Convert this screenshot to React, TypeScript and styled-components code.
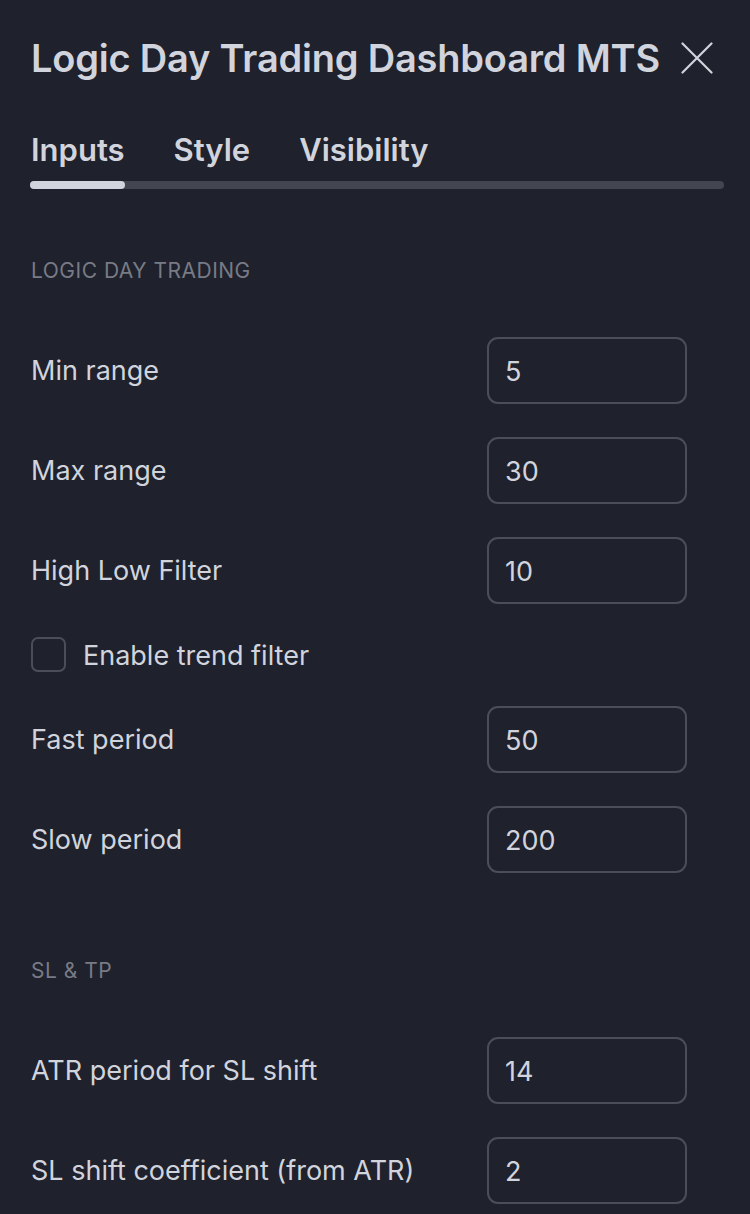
import React from "react";
import styled, { createGlobalStyle } from "styled-components";

const Global = createGlobalStyle`
  html, body { margin: 0; padding: 0; background: #1f212c; }
  body { font-family: Inter, "Noto Sans", sans-serif; color: #d1d4dc; -webkit-font-smoothing: antialiased; }
  * { box-sizing: border-box; }
`;

const Panel = styled.div`
  width: 750px;
  min-height: 1214px;
  background: #1f212c;
  padding: 0 26px 0 31px;
  overflow: hidden;
`;

const Header = styled.div`
  height: 115px;
  display: flex;
  align-items: center;
  justify-content: space-between;
  padding-right: 10px;
`;

const Title = styled.h1`
  margin: 0;
  font-size: 38px;
  font-weight: 600;
  line-height: 46px;
  color: #d1d4dc;
  letter-spacing: -0.2px;
  white-space: nowrap;
`;

const CloseButton = styled.button`
  width: 34px;
  height: 34px;
  padding: 0;
  border: none;
  background: transparent;
  color: #d1d4dc;
  display: flex;
  align-items: center;
  justify-content: center;
  cursor: pointer;
`;

const Tabs = styled.div`
  display: flex;
  gap: 49px;
  height: 66px;
  padding-top: 3px;
  align-items: center;
`;

const Tab = styled.div<{ $active?: boolean }>`
  font-size: 31px;
  font-weight: 600;
  color: #d1d4dc;
  line-height: 40px;
`;

const Track = styled.div`
  height: 8px;
  border-radius: 4px;
  background: #434651;
  margin-left: -1px;
  display: flex;
`;

const TrackFill = styled.div`
  width: 95px;
  height: 100%;
  border-radius: 4px;
  background: #d1d4dc;
`;

const SectionTitle = styled.div`
  padding-top: 70px;
  margin-bottom: 37px;
  font-size: 21px;
  line-height: 24px;
  color: #787b86;
  letter-spacing: 0.5px;
  text-transform: uppercase;
`;

const Row = styled.div<{ $compact?: boolean }>`
  height: ${(p) => (p.$compact ? "69px" : "100px")};
  display: flex;
  align-items: center;
  justify-content: space-between;
  padding-right: 37px;
`;

const Label = styled.span`
  font-size: 27px;
  line-height: 34px;
  color: #d1d4dc;
  padding-top: 2px;
`;

const NumberInput = styled.input`
  width: 200px;
  height: 67px;
  border: 2px solid #4b4e59;
  border-radius: 11px;
  background: transparent;
  color: #d1d4dc;
  font-family: inherit;
  font-size: 27px;
  padding: 2px 0 0 16px;
  outline: none;
`;

const CheckLabel = styled.label`
  display: flex;
  align-items: center;
  gap: 17px;
  cursor: pointer;
`;

const CheckBox = styled.span`
  width: 35px;
  height: 35px;
  border: 2px solid #4b4e59;
  border-radius: 7px;
  display: inline-block;
`;

type Field = { label: string; value: string } | { checkbox: string };

const sections: { title: string; fields: Field[] }[] = [
  {
    title: "Logic Day Trading",
    fields: [
      { label: "Min range", value: "5" },
      { label: "Max range", value: "30" },
      { label: "High Low Filter", value: "10" },
      { checkbox: "Enable trend filter" },
      { label: "Fast period", value: "50" },
      { label: "Slow period", value: "200" },
    ],
  },
  {
    title: "SL & TP",
    fields: [
      { label: "ATR period for SL shift", value: "14" },
      { label: "SL shift coefficient (from ATR)", value: "2" },
    ],
  },
];

export default function App() {
  return (
    <>
      <Global />
      <Panel>
        <Header>
          <Title>Logic Day Trading Dashboard MTS</Title>
          <CloseButton aria-label="Close">
            <svg width="32" height="32" viewBox="0 0 32 32" fill="none">
              <path d="M1.5 1.5 L30.5 30.5 M30.5 1.5 L1.5 30.5" stroke="currentColor" strokeWidth="2.2" strokeLinecap="round" />
            </svg>
          </CloseButton>
        </Header>
        <Tabs>
          <Tab $active>Inputs</Tab>
          <Tab>Style</Tab>
          <Tab>Visibility</Tab>
        </Tabs>
        <Track>
          <TrackFill />
        </Track>
        {sections.map((s) => (
          <div key={s.title}>
            <SectionTitle>{s.title}</SectionTitle>
            {s.fields.map((f, i) =>
              "checkbox" in f ? (
                <Row key={i} $compact>
                  <CheckLabel>
                    <CheckBox />
                    <Label>{f.checkbox}</Label>
                  </CheckLabel>
                </Row>
              ) : (
                <Row key={i}>
                  <Label>{f.label}</Label>
                  <NumberInput defaultValue={f.value} readOnly />
                </Row>
              )
            )}
          </div>
        ))}
      </Panel>
    </>
  );
}
